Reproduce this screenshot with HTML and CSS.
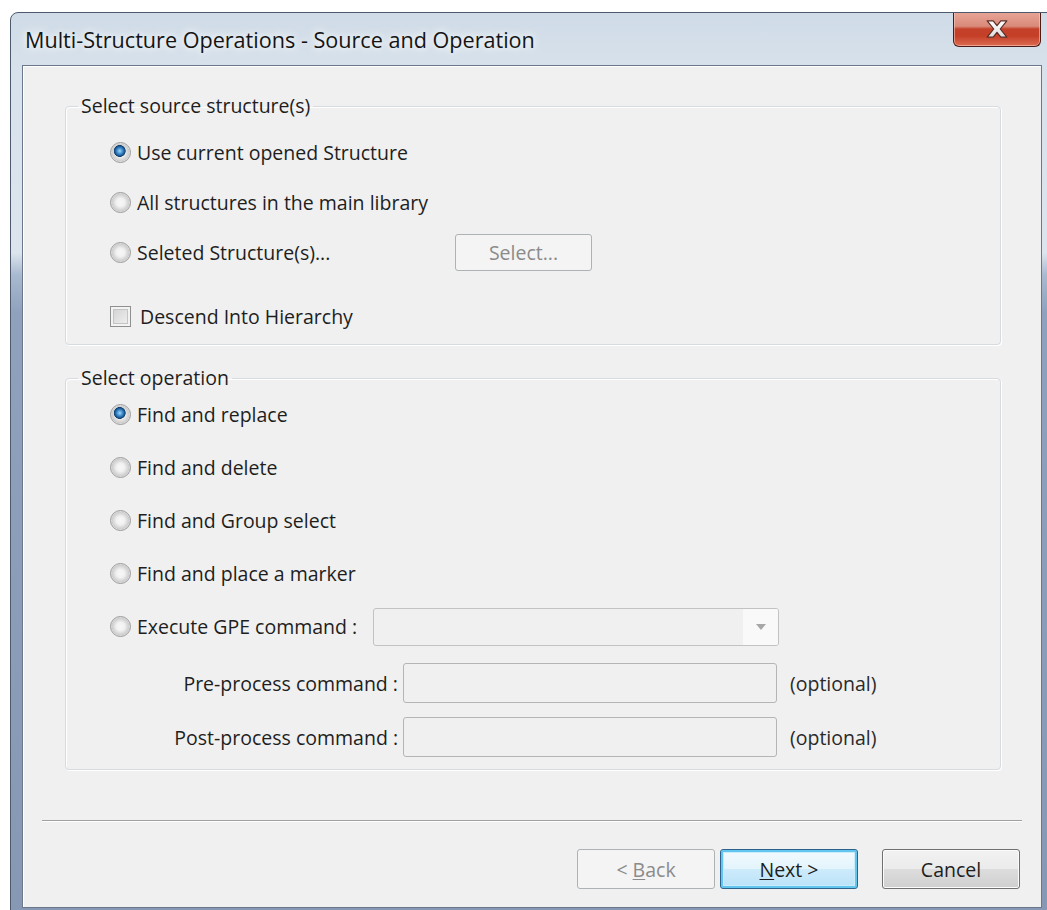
FILE: index.html
```html
<!DOCTYPE html>
<html lang="en">
<head>
<meta charset="utf-8">
<title>Multi-Structure Operations - Source and Operation</title>
<link rel="stylesheet" href="styles.css">
</head>
<body>
<div class="window">
  <header class="titlebar">
    <span class="title">Multi-Structure Operations - Source and Operation</span>
    <button class="close" type="button" aria-label="Close">
      <svg width="24" height="20" viewBox="0 0 22 18" aria-hidden="true">
        <defs>
          <linearGradient id="xfill" x1="0" y1="0" x2="0" y2="1">
            <stop offset="0" stop-color="#ffffff"/>
            <stop offset="1" stop-color="#dcdcdc"/>
          </linearGradient>
        </defs>
        <polygon points="2,1.5 7.5,1.5 11,6 14.5,1.5 20,1.5 14,9 20,16.5 14.5,16.5 11,12 7.5,16.5 2,16.5 8,9"
                 fill="url(#xfill)" stroke="#5b2c25" stroke-width="1.1" stroke-linejoin="round"/>
      </svg>
    </button>
  </header>

  <main class="client">
    <div class="groups">
      <fieldset class="group source">
        <legend>Select source structure(s)</legend>
        <div class="group-body">
          <label class="opt"><input class="radio" type="radio" name="source" checked><span class="opt-text">Use current opened Structure</span></label>
          <label class="opt"><input class="radio" type="radio" name="source"><span class="opt-text">All structures in the main library</span></label>
          <div class="opt">
            <label class="opt-inline"><input class="radio" type="radio" name="source"><span class="opt-text select-text">Seleted Structure(s)...</span></label>
            <button class="btn select-btn" type="button" disabled>Select...</button>
          </div>
          <label class="opt check-row"><input class="check" type="checkbox"><span class="check-text">Descend Into Hierarchy</span></label>
        </div>
      </fieldset>

      <fieldset class="group operation">
        <legend>Select operation</legend>
        <div class="group-body">
          <label class="opt"><input class="radio" type="radio" name="operation" checked><span class="opt-text">Find and replace</span></label>
          <label class="opt"><input class="radio" type="radio" name="operation"><span class="opt-text">Find and delete</span></label>
          <label class="opt"><input class="radio" type="radio" name="operation"><span class="opt-text">Find and Group select</span></label>
          <label class="opt"><input class="radio" type="radio" name="operation"><span class="opt-text">Find and place a marker</span></label>
          <div class="opt">
            <label class="opt-inline"><input class="radio" type="radio" name="operation"><span class="opt-text gpe-text">Execute GPE command :</span></label>
            <div class="combo" aria-disabled="true">
              <span class="combo-value"></span>
              <span class="combo-arrow"><span class="arrow"></span></span>
            </div>
          </div>
          <div class="cmd-row first">
            <span class="cmd-label">Pre-process command :</span>
            <input class="field" type="text" disabled>
            <span class="hint">(optional)</span>
          </div>
          <div class="cmd-row">
            <span class="cmd-label">Post-process command :</span>
            <input class="field" type="text" disabled>
            <span class="hint">(optional)</span>
          </div>
        </div>
      </fieldset>
    </div>

    <hr class="separator">

    <div class="buttons">
      <button class="btn" type="button" disabled>&lt; <u>B</u>ack</button>
      <button class="btn default" type="button"><u>N</u>ext &gt;</button>
      <button class="btn cancel" type="button">Cancel</button>
    </div>
  </main>
</div>
</body>
</html>
```

FILE: styles.css
```css
* {
  box-sizing: border-box;
}

html,
body {
  margin: 0;
  height: 100%;
  overflow: hidden;
  background: #ffffff;
}

body {
  font-family: "Open Sans", "Noto Sans", "Liberation Sans", sans-serif;
  font-size: 19.5px;
  color: #1e1e1e;
}

/* ---- window frame ---- */
.window {
  margin: 12px 0 0 10px;
  width: 1045px;
  height: 910px;
  border: 1px solid #4d5a6b;
  border-radius: 8px 8px 0 0;
  background: linear-gradient(to bottom,
      #cfdbe7 0,
      #d8e2ec 60px,
      #dce5ee 240px,
      #a9b9cf 262px,
      #8fa1bd 300px,
      #8798b5 100%);
  display: flex;
  flex-direction: column;
  overflow: hidden;
}

.titlebar {
  flex: none;
  height: 52px;
  display: flex;
  align-items: flex-start;
  padding-left: 14px;
}

.title {
  font-size: 21.6px;
  line-height: 52px;
  margin-top: 1px;
  color: #141414;
  text-shadow: 0 0 6px #ffffff, 0 0 12px rgba(255, 255, 255, 0.9);
}

.close {
  margin: -1px 13px 0 auto;
  width: 88px;
  height: 35px;
  padding: 0;
  border: 1px solid #4a1d17;
  border-top: none;
  border-radius: 0 0 6px 6px;
  background: linear-gradient(to bottom,
      #e7a697 0,
      #d98a7a 42%,
      #c3412a 50%,
      #c53f27 70%,
      #dc6b52 100%);
  box-shadow: inset 0 0 0 1px rgba(255, 210, 200, 0.55);
  display: grid;
  place-items: center;
}

/* ---- client area ---- */
.client {
  flex: none;
  margin-left: 11px;
  width: 1020px;
  height: 843px;
  border: 1px solid #6b778a;
  background: #f0f0f0;
  box-shadow: inset 1px 1px 0 #ffffff;
  padding: 30px 19px 0 19px;
  display: flex;
  flex-direction: column;
}

.groups {
  padding: 0 21px 0 23px;
}

/* ---- group boxes ---- */
.group {
  margin: 0;
  padding: 0 0 0 12px;
  min-width: 0;
  border: 1px solid #d6dbe0;
  border-radius: 4px;
  box-shadow: inset 1px 1px 0 #ffffff, 1px 1px 0 #ffffff;
}

.group legend {
  padding: 0 3px;
  line-height: 20px;
}

.operation {
  margin-top: 23px;
}

.group-body {
  padding-left: 32px;
}

.source .group-body {
  padding-top: 11px;
  padding-bottom: 8px;
}

.operation .group-body {
  padding-bottom: 5px;
}

.opt {
  display: flex;
  align-items: center;
  height: 50px;
}

.operation .opt {
  height: 53px;
}

.opt-inline {
  display: flex;
  align-items: center;
}

.opt-text {
  margin-left: 6px;
}

.select-text {
  width: 318px;
}

.gpe-text {
  width: 236px;
}

.check-row {
  height: 40px;
  margin-top: 19px;
}

.check-text {
  margin-left: 9px;
}

/* ---- radio buttons & check box ---- */
.radio {
  -webkit-appearance: none;
  appearance: none;
  flex: none;
  margin: 0;
  width: 21px;
  height: 21px;
  border-radius: 50%;
  border: 1px solid #9a9a9a;
  background: radial-gradient(circle at 50% 50%,
      #f7f7f7 0,
      #f2f2f2 4px,
      #d9d9d9 7px,
      #cdcdcd 8.5px,
      #e8e8e8 9.5px);
}

.radio:checked {
  background:
    radial-gradient(circle at 46% 42%,
      #a9d6f5 0,
      #4a97d6 2.5px,
      #1d5f9d 4.5px,
      #123f6c 5.6px,
      rgba(18, 63, 108, 0) 6.2px),
    radial-gradient(circle at 50% 50%,
      #f7f7f7 0,
      #f2f2f2 4px,
      #d9d9d9 7px,
      #cdcdcd 8.5px,
      #e8e8e8 9.5px);
}

.check {
  -webkit-appearance: none;
  appearance: none;
  flex: none;
  margin: 0;
  width: 21px;
  height: 21px;
  border: 1px solid #8e8f8f;
  background: linear-gradient(135deg, #cfcfcf, #f4f4f4);
  box-shadow: inset 0 0 0 2px #f3f3f3, inset 0 0 0 3px #c4c4c4;
}

/* ---- buttons ---- */
.btn {
  font: inherit;
  color: #1e1e1e;
  width: 138px;
  height: 40px;
  padding: 0;
  border: 1px solid #707070;
  border-radius: 3px;
  background: linear-gradient(to bottom, #f2f2f2 0, #ebebeb 50%, #dddddd 50%, #cfcfcf 100%);
  box-shadow: inset 0 0 0 1px #fbfbfb;
}

.btn:disabled {
  color: #8b8b8b;
  border-color: #adb2b5;
  background: #f4f4f4;
  box-shadow: none;
}

.btn u {
  text-underline-offset: 2px;
}

.select-btn {
  width: 137px;
  height: 37px;
}

.btn.default {
  border-color: #2c628b;
  background: linear-gradient(to bottom, #f3fafe 0, #e3f4fc 50%, #cdebfb 50%, #b9e2f8 100%);
  box-shadow: inset 0 0 0 2px #62c6ef, inset 0 0 0 3px #c9ecfa;
}

.btn.cancel {
  margin-left: 19px;
}

/* ---- combo & edit fields ---- */
.combo {
  width: 406px;
  height: 38px;
  border: 1px solid #c2c2c2;
  border-radius: 3px;
  background: #f0f0f0;
  display: flex;
  overflow: hidden;
}

.combo-value {
  flex: 1;
}

.combo-arrow {
  width: 35px;
  background: #f9f9f9;
  display: grid;
  place-items: center;
}

.arrow {
  width: 0;
  height: 0;
  border-left: 5px solid transparent;
  border-right: 5px solid transparent;
  border-top: 6px solid #a7a7a7;
}

.cmd-row {
  display: flex;
  align-items: center;
  height: 54px;
}

.cmd-row.first {
  margin-top: 3px;
}

.cmd-label {
  width: 288px;
  text-align: right;
}

.field {
  margin-left: 5px;
  width: 374px;
  height: 40px;
  border: 1px solid #b5b5b5;
  border-radius: 3px;
  background: #f0f0f0;
  font: inherit;
}

.hint {
  margin-left: 13px;
  color: #2a2a2a;
}

/* ---- separator & command buttons ---- */
.separator {
  margin: 50px 0 0;
  height: 0;
  border: 0;
  border-top: 1px solid #a0a0a0;
  border-bottom: 1px solid #ffffff;
}

.buttons {
  margin-top: 27px;
  padding-right: 2px;
  display: flex;
  justify-content: flex-end;
  gap: 5px;
}
```
